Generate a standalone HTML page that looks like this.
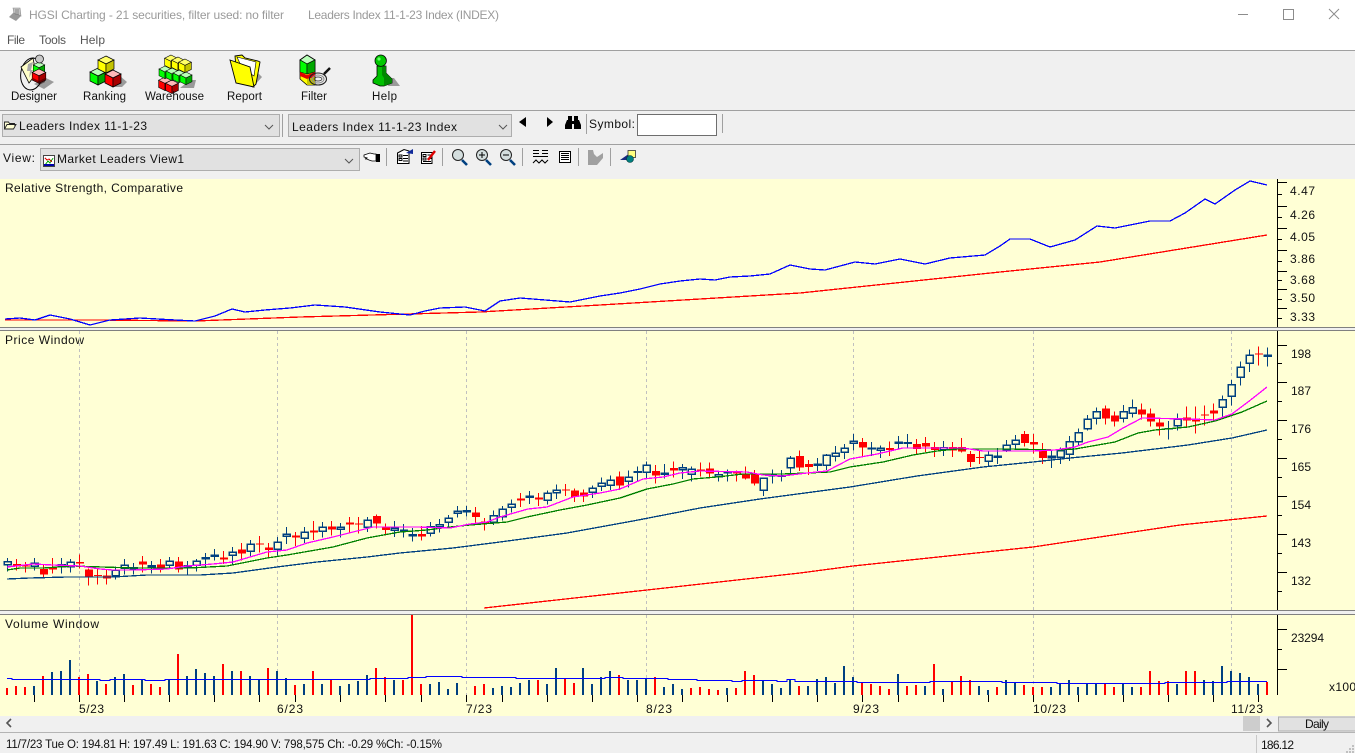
<!DOCTYPE html>
<html lang="en"><head><meta charset="utf-8"><title>HGSI Charting</title>
<style>
html,body{margin:0;padding:0;background:#f0f0f0;overflow:hidden}
svg{display:block}
text{font-family:"Liberation Sans",sans-serif;font-size:12px;fill:#111}
.t{font-size:11.5px}
.c{shape-rendering:crispEdges}
.bw{stroke:#004080;fill:none;stroke-width:4}
.h{stroke:#004080;fill:#ffffd5;stroke-width:4.5}
.rw{stroke:#f00;fill:none;stroke-width:4}
.rf{fill:#f00}
.o{stroke:#000;stroke-width:.7}
</style></head><body>
<svg width="1355" height="753" viewBox="0 0 1355 753" xmlns="http://www.w3.org/2000/svg">
<defs>
<g id="cy"><polygon class="o" fill="#ffff66" points="0,0 8,4 0,8 -8,4"/><polygon class="o" fill="#ffff00" points="-8,4 0,8 0,17 -8,13"/><polygon class="o" fill="#c4c400" points="0,8 8,4 8,13 0,17"/></g>
<g id="cg"><polygon class="o" fill="#b8ffb8" points="0,0 8,4 0,8 -8,4"/><polygon class="o" fill="#00ff00" points="-8,4 0,8 0,17 -8,13"/><polygon class="o" fill="#00a800" points="0,8 8,4 8,13 0,17"/></g>
<g id="cr"><polygon class="o" fill="#ffb8b8" points="0,0 8,4 0,8 -8,4"/><polygon class="o" fill="#ff0000" points="-8,4 0,8 0,17 -8,13"/><polygon class="o" fill="#a80000" points="0,8 8,4 8,13 0,17"/></g>
<g id="mag"><line x1="4" y1="5" x2="9" y2="10" stroke="#004080" stroke-width="2.6"/><circle cx="0" cy="0" r="5.5" fill="#d4dede" stroke="#222" stroke-width="1"/></g>
</defs>

<!-- chrome -->
<rect width="1355" height="50" fill="#fff"/>
<rect y="50" width="1355" height="1" fill="#a0a0a0"/>
<rect y="110" width="1355" height="1" fill="#a0a0a0"/>
<rect y="144" width="1355" height="1" fill="#a0a0a0"/>
<rect y="179" width="1355" height="537" fill="#ffffd5"/>

<!-- title -->
<g>
<polygon points="9,17 14,12 21,16 16,21" fill="#999"/>
<polygon points="13,8 20,8 21,16 14,13" fill="#c4c4c4" stroke="#8a8a8a" stroke-width=".6"/>
<path d="M15 10h4M15 12h4M15 14h4" stroke="#777" stroke-width=".7"/>
</g>
<text x="29" y="19" style="fill:#9a9a9a" textLength="255" lengthAdjust="spacing">HGSI Charting - 21 securities, filter used: no filter</text>
<text x="308" y="19" style="fill:#9a9a9a" textLength="191" lengthAdjust="spacing">Leaders Index 11-1-23 Index (INDEX)</text>
<g class="c" stroke="#8c8c8c" fill="none">
<path d="M1238 14.500h10"/>
<rect x="1283.500" y="9.500" width="10" height="10"/>
</g>
<path d="M1329 9l10 10M1339 9l-10 10" stroke="#8c8c8c" fill="none"/>
<text x="7" y="44" style="fill:#555" textLength="18" lengthAdjust="spacing">File</text>
<text x="39" y="44" style="fill:#555" textLength="27" lengthAdjust="spacing">Tools</text>
<text x="80" y="44" style="fill:#555" textLength="25" lengthAdjust="spacing">Help</text>

<!-- toolbar icons -->
<!-- Designer -->
<g>
<polygon points="34,84 44,89 54,82 46,78" fill="#9a9a9a"/>
<ellipse cx="32" cy="74" rx="11" ry="16" fill="none" stroke="#000" stroke-width="1" transform="rotate(8 32 72)"/>
<polygon points="21,67 33,58 36,74 29,83" fill="#ffffc8" stroke="#000" stroke-width=".8"/>
<polygon points="28,64 33,62 31,70 33,70 29,78 30,71 27,71" fill="#a8a8a8"/>
<use href="#cg" transform="translate(39,62) scale(.72)"/>
<circle cx="39.500" cy="59" r="4" fill="#c8c8c8" stroke="#222" stroke-width=".8"/>
<use href="#cr" transform="translate(39,69) scale(.85)"/>
<path d="M33 78l6 3 0 2-6-3zM39 81l6-3 0 4-6 3z" fill="#220000" opacity=".55"/>
</g>
<!-- Ranking -->
<g>
<polygon points="112,87 122,87 127,82 120,76" fill="#9a9a9a"/>
<use href="#cg" transform="translate(98,68)"/>
<use href="#cr" transform="translate(113,70)"/>
<use href="#cy" transform="translate(106,56)"/>
</g>
<!-- Warehouse -->
<g>
<polygon points="180,88 194,88 196,80 190,80" fill="#9a9a9a"/>
<use href="#cr" transform="translate(165,77) scale(.8)"/>
<use href="#cr" transform="translate(172,80) scale(.8)"/>
<use href="#cg" transform="translate(165,66) scale(.75)"/>
<use href="#cg" transform="translate(172,68) scale(.75)"/>
<use href="#cg" transform="translate(179,70) scale(.75)"/>
<use href="#cg" transform="translate(186,72) scale(.75)"/>
<use href="#cy" transform="translate(171,55) scale(.8)"/>
<use href="#cy" transform="translate(178,57) scale(.8)"/>
<use href="#cy" transform="translate(185,59) scale(.8)"/>
</g>
<!-- Report -->
<g>
<polygon points="253,87 262,77 257,72 250,82" fill="#9a9a9a"/>
<polygon points="235,56 242,55 245,58 258,61 260,62 256,84 253,87 237,80" fill="#ffff00" stroke="#000" stroke-width=".9"/>
<polygon points="237,57 256,62 254,76 242,68" fill="#fff" stroke="#000" stroke-width=".6"/>
<polygon points="230,60 250,67 254,87 236,83" fill="#ffff00" stroke="#000" stroke-width=".9"/>
</g>
<!-- Filter -->
<g>
<polygon points="300,60 307,55 315,60 315,85 307,85 300,79" fill="#ffff00" stroke="#000" stroke-width=".8"/>
<polygon points="300,60 307,55 315,60 307,64" fill="#b8ffb8" stroke="#000" stroke-width=".8"/>
<polygon points="300,60 307,64 307,74 300,72" fill="#00ff00" stroke="#000" stroke-width=".6"/>
<polygon points="307,64 315,60 315,72 307,74" fill="#00a800" stroke="#000" stroke-width=".6"/>
<polygon points="300,72 307,75 315,72 315,77 307,79 300,76" fill="#e00000"/>
<polygon points="307,79 315,77 315,85 307,85" fill="#c4c400"/>
<ellipse cx="318" cy="79" rx="8.500" ry="6" fill="none" stroke="#222" stroke-width="1.100"/>
<ellipse cx="318" cy="79" rx="6" ry="4" fill="none" stroke="#8a8a8a" stroke-width="1"/>
<ellipse cx="318" cy="79" rx="4" ry="2" fill="none" stroke="#222" stroke-width=".7"/>
<line x1="324" y1="74" x2="330" y2="68" stroke="#111" stroke-width="2.500"/>
</g>
<!-- Help -->
<g>
<polygon points="388,86 400,86 394,78 390,78" fill="#9a9a9a"/>
<polygon points="373,80 377,76 377,66 386,66 386,73 392,79 392,83 384,86 380,86 373,83" fill="#00c000" stroke="#000" stroke-width=".8"/>
<polygon points="382,67 386,66 386,73 392,79 392,83 384,86 384,78 382,75" fill="#008800"/>
<circle cx="380.700" cy="60.700" r="5.700" fill="#00c800" stroke="#000" stroke-width=".8"/>
<circle cx="379" cy="59" r="1.600" fill="#66ff66"/>
</g>
<text class="t" x="11" y="100" textLength="46" lengthAdjust="spacing">Designer</text>
<text class="t" x="83" y="100" textLength="43" lengthAdjust="spacing">Ranking</text>
<text class="t" x="145" y="100" textLength="59" lengthAdjust="spacing">Warehouse</text>
<text class="t" x="227" y="100" textLength="35" lengthAdjust="spacing">Report</text>
<text class="t" x="301" y="100" textLength="26" lengthAdjust="spacing">Filter</text>
<text class="t" x="372" y="100" textLength="25" lengthAdjust="spacing">Help</text>

<!-- row 2 -->
<g class="c">
<rect x="2.500" y="114.500" width="277" height="22" fill="#e1e1e1" stroke="#adadad"/>
<rect x="282" y="114" width="1" height="23" fill="#a0a0a0"/>
<rect x="288.500" y="114.500" width="223" height="22" fill="#e1e1e1" stroke="#adadad"/>
<rect x="586" y="114" width="1" height="20" fill="#a0a0a0"/>
<rect x="637.500" y="114.500" width="79" height="21" fill="#fff" stroke="#6e6e6e"/>
<rect x="722" y="114" width="1" height="19" fill="#a0a0a0"/>
</g>
<path d="M4.500 129V122h4l1 1.500h5v2M4.500 129l2.500-4.500h9l-2.500 4.500z" fill="#ffffd5" stroke="#222" stroke-width=".9"/>
<text x="19" y="130" textLength="128" lengthAdjust="spacing">Leaders Index 11-1-23</text>
<text x="292" y="131" textLength="165" lengthAdjust="spacing">Leaders Index 11-1-23 Index</text>
<polygon points="526,117 526,127 519,122" fill="#000"/>
<polygon points="547,117 547,127 553,122" fill="#000"/>
<g fill="#000">
<rect x="568" y="116" width="4" height="4"/><rect x="574" y="116" width="4" height="4"/>
<polygon points="567,120 572,120 572,129 565,129 565,125"/>
<polygon points="574,120 579,120 581,125 581,129 574,129"/>
<rect x="572" y="121" width="2" height="3"/>
</g>
<text x="589" y="128" textLength="46" lengthAdjust="spacing">Symbol:</text>

<!-- row 3 -->
<text x="3" y="162" textLength="32" lengthAdjust="spacing">View:</text>
<rect class="c" x="40.500" y="148.500" width="319" height="22" fill="#e1e1e1" stroke="#adadad"/>
<path d="M265 125l4 4 4-4M499 125l4 4 4-4M345 159l4 4 4-4" fill="none" stroke="#555"/>
<g class="c">
<rect x="43.500" y="155.500" width="11" height="11" fill="#fff" stroke="#444"/>
<path d="M45 165l3-4 2 2 3-5" fill="none" stroke="#0a0"/>
<path d="M45 158l2 2 2-1 3 3" fill="none" stroke="#d00"/>
<rect x="44" y="164" width="10" height="2" fill="#00a"/>
</g>
<text x="57" y="163" textLength="127" lengthAdjust="spacing">Market Leaders View1</text>
<g class="c" fill="#a0a0a0">
<rect x="386" y="148" width="1" height="18"/><rect x="442" y="148" width="1" height="18"/>
<rect x="522" y="148" width="1" height="18"/><rect x="578" y="148" width="1" height="18"/>
<rect x="610" y="148" width="1" height="18"/>
</g>
<!-- hand -->
<path d="M364 155l6-2 4 1h2v7h-4l-3-1-2-1h-2l2-1-3-1z" fill="#fff" stroke="#000" stroke-width=".8"/>
<rect x="376" y="154" width="4" height="8" fill="#000"/>
<!-- doc icons -->
<g fill="#fff" stroke="#000">
<polygon points="397.500,153 404,149.500 409,151 409,163.500 397.500,163.500"/>
<polygon points="421.500,152.500 432,152.500 432,163.500 421.500,163.500"/>
</g>
<path d="M399 155h3v2h-3zM399 158.500h3v2h-3zM403 155.500h5M403 158.500h5M403 161h5M423 154.500h3v2h-3zM423 158h3v2h-3zM427.500 155h4M427.500 158.500h4M423 161.500h8" stroke="#000" fill="none" stroke-width=".9"/>
<polygon points="406,153 413,149 413,154" fill="#102a9a"/>
<line x1="428" y1="160" x2="435" y2="151" stroke="#d00" stroke-width="2.400"/>
<!-- magnifiers -->
<use href="#mag" transform="translate(458,155)"/>
<use href="#mag" transform="translate(482,155)"/>
<use href="#mag" transform="translate(506,155)"/>
<path d="M479 155h6M482 152v6M503 155h6" stroke="#000" fill="none"/>
<!-- lines -->
<path class="c" d="M533 150.500h6M542 150.500h6M533 153.500h6M542 153.500h6M533 156.500h15" stroke="#000" fill="none"/>
<path d="M533 163l3-3 3 3 3-3 3 3 3-3" stroke="#000" fill="none"/>
<!-- list -->
<rect class="c" x="559.500" y="151.500" width="11" height="11" fill="#fff" stroke="#000"/>
<path class="c" d="M561 153.500h8M561 155.500h8M561 157.500h8M561 159.500h8" stroke="#000" fill="none"/>
<!-- gray chart -->
<polygon points="588,165 588,150 593,150 594,154 597,157 603,153 603,158 597,165" fill="#a0a0a0"/>
<!-- last -->
<polygon points="620,160 630,153 630,160" fill="#1a2a80"/>
<rect x="628" y="150.500" width="7.500" height="7" fill="#ffff80" stroke="#333" stroke-width=".8"/>
<circle cx="630" cy="159" r="3.500" fill="#008080" stroke="#003838" stroke-width=".6"/>

<!-- pane separators -->
<g class="c">
<rect y="327" width="1355" height="1" fill="#808080"/><rect y="328" width="1355" height="2" fill="#f0f0f0"/><rect y="330" width="1355" height="1" fill="#808080"/>
<rect y="610" width="1355" height="1" fill="#808080"/><rect y="611" width="1355" height="3" fill="#f0f0f0"/><rect y="614" width="1355" height="1" fill="#808080"/>
</g>

<!-- pane labels -->
<text x="5" y="192" textLength="178" lengthAdjust="spacing">Relative Strength, Comparative</text>
<text x="5" y="344" textLength="79" lengthAdjust="spacing">Price Window</text>
<text x="5" y="628" textLength="94" lengthAdjust="spacing">Volume Window</text>

<!-- dashed gridlines -->
<path class="c" d="M79.500 331V610M277.500 331V610M466.500 331V610M646.500 331V610M853.500 331V610M1033.500 331V610M1231.500 331V610M79.500 615V695M277.500 615V695M466.500 615V695M646.500 615V695M853.500 615V695M1033.500 615V695M1231.500 615V695" stroke="#c0c0c0" stroke-dasharray="3 3" fill="none"/>

<!-- RS lines -->
<g class="c" fill="none" stroke-width="1.300">
<polyline stroke="#ff0000" points="5,320 100,320 195,321 300,317 480,312 600,305 800,293 1000,272 1100,262 1267,235"/>
<polyline stroke="#0000ff" points="5,319 20,318 35,320 50,315 70,319 90,325 110,320 140,318 175,320 195,321 215,316 232,309 245,312 265,310 290,308 315,305 345,307 380,312 410,315 425,311 440,308 465,307 485,311 500,301 520,298 545,300 570,302 600,296 620,293 640,289 660,284 680,281 700,279 715,280 730,277 750,276 770,274 790,265 810,269 825,270 840,266 855,262 875,264 900,259 925,264 950,258 985,255 1000,246 1010,239 1030,239 1050,247 1075,240 1097,226 1115,228 1135,224 1150,221 1170,221 1185,213 1205,199 1215,204 1235,190 1250,181 1267,185"/>
</g>

<!-- candles -->
<g class="c" transform="translate(0,380) scale(.33333)">
<path class="bw" d="M22.500 534V575M103.500 534V571M184.500 534V581M211.500 537V578M346.500 559V599M373.500 537V584M400.500 549V584M454.500 543V581M508.500 531V566M562.500 543V584M589.500 537V575M616.500 519V560M643.500 507V542M697.500 501V554M751.500 480V530M832.500 471V527M859.500 441V492M913.500 441V489M967.500 426V472M1021.500 429V473M1102.500 411V456M1183.500 423V471"/>
<path class="h" d="M13.500 545h21v9h-21zM94.500 550h21v9h-21zM175.500 554h21v6h-21zM202.500 547h21v13h-21zM337.500 571h21v16h-21zM364.500 556h21v9h-21zM391.500 564h21v3h-21zM445.500 557h21v3h-21zM499.500 544h21v12h-21zM553.500 557h21v3h-21zM580.500 544h21v12h-21zM607.500 533h21v3h-21zM634.500 526h21v3h-21zM688.500 517h21v9h-21zM742.500 493h21v21h-21zM823.500 487h21v21h-21zM850.500 463h21v6h-21zM904.500 457h21v18h-21zM958.500 442h21v12h-21zM1012.500 442h21v6h-21zM1093.500 421h21v21h-21zM1174.500 445h21v6h-21z"/>
<path class="rw" d="M49.500 537V572M76.500 546V578M130.500 555V594M157.500 534V581M238.500 524V565M265.500 565V617M292.500 565V614M319.500 570V614M427.500 528V578M481.500 537V578M535.500 531V578M670.500 513V552M724.500 489V542M778.500 468V518M805.500 489V533M886.500 456V498M940.500 423V480M994.500 423V466M1048.500 411V457M1075.500 411V460M1129.500 403V445M1156.500 430V466"/>
<path class="rf" d="M39 552h24v7h-24zM66 556h24v4h-24zM120 567h24v17h-24zM147 562h24v7h-24zM228 546h24v5h-24zM255 568h24v22h-24zM282 585h24v3h-24zM309 586h24v9h-24zM417 544h24v10h-24zM471 553h24v10h-24zM525 544h24v24h-24zM660 532h24v7h-24zM714 508h24v13h-24zM768 490h24v4h-24zM795 502h24v8h-24zM876 466h24v6h-24zM930 451h24v7h-24zM984 439h24v10h-24zM1038 427h24v7h-24zM1065 430h24v4h-24zM1119 408h24v23h-24zM1146 441h24v9h-24z"/>
</g>
<g class="c" transform="translate(400,440) scale(.33333)">
<path class="bw" d="M10.500 252V293M37.500 264V305M91.500 246V290M118.500 237V278M145.500 225V264M172.500 198V233M199.500 198V230M280.500 212V255M307.500 198V242M334.500 178V218M388.500 153V192M442.500 151V194M469.500 133V177M577.500 136V174M604.500 112V153M631.500 106V150M685.500 91V142M712.500 79V123M739.500 64V116M793.500 72V116M847.500 72V117M874.500 79V125M955.500 91V125M982.500 88V125"/>
<path class="h" d="M1.500 271h21v3h-21zM28.500 284h21v3h-21zM82.500 260h21v20h-21zM109.500 254h21v7h-21zM136.500 235h21v12h-21zM163.500 214h21v6h-21zM190.500 212h21v3h-21zM271.500 227h21v20h-21zM298.500 208h21v22h-21zM325.500 193h21v9h-21zM379.500 169h21v3h-21zM433.500 160h21v21h-21zM460.500 151h21v7h-21zM568.500 145h21v12h-21zM595.500 130h21v9h-21zM622.500 121h21v15h-21zM676.500 112h21v12h-21zM703.500 96h21v1h-21zM730.500 76h21v21h-21zM784.500 100h21v3h-21zM838.500 83h21v6h-21zM865.500 88h21v15h-21zM946.500 104h21v6h-21zM973.500 98h21v1h-21z"/>
<path class="rw" d="M64.500 258V302M226.500 201V249M253.500 234V272M361.500 159V201M415.500 159V198M496.500 132V168M523.500 145V186M550.500 148V186M658.500 94V150M766.500 75V131M820.500 64V113M901.500 67V110M928.500 67V115M1009.500 91V125M1036.500 79V118"/>
<path class="rf" d="M54 282h24v8h-24zM216 217h24v14h-24zM243 245h24v6h-24zM351 175h24v7h-24zM405 172h24v7h-24zM486 148h24v4h-24zM513 151h24v20h-24zM540 157h24v12h-24zM648 109h24v28h-24zM756 93h24v14h-24zM810 84h24v8h-24zM891 88h24v6h-24zM918 85h24v15h-24zM999 97h24v3h-24zM1026 103h24v13h-24z"/>
</g>
<g class="c" transform="translate(750,390) scale(.33333)">
<path class="bw" d="M40.500 265V318M67.500 238V281M94.500 240V275M121.500 198V250M202.500 204V243M229.500 192V240M256.500 168V214M283.500 162V207M310.500 132V182M364.500 156V198M391.500 166V204M445.500 138V178M472.500 132V174M580.500 153V198M715.500 183V231M742.500 174V222M769.500 150V186M796.500 135V178M904.500 180V234"/>
<path class="h" d="M31.500 265h21v36h-21zM58.500 256h21v2h-21zM85.500 257h21v2h-21zM112.500 205h21v28h-21zM193.500 223h21v3h-21zM220.500 196h21v30h-21zM247.500 190h21v9h-21zM274.500 175h21v12h-21zM301.500 154h21v6h-21zM355.500 175h21v2h-21zM382.500 175h21v6h-21zM436.500 157h21v3h-21zM463.500 159h21v1h-21zM571.500 174h21v6h-21zM706.500 196h21v18h-21zM733.500 199h21v3h-21zM760.500 166h21v15h-21zM787.500 151h21v12h-21zM895.500 199h21v4h-21z"/>
<path class="rw" d="M13.500 240V287M148.500 181V243M175.500 210V255M337.500 144V198M418.500 154V198M499.500 147V192M526.500 141V186M553.500 156V201M607.500 156V201M634.500 144V188M661.500 183V231M688.500 180V222M823.500 123V170M850.500 132V190M877.500 159V222"/>
<path class="rf" d="M3 253h24v28h-24zM138 198h24v35h-24zM165 222h24v9h-24zM327 156h24v17h-24zM408 174h24v6h-24zM489 162h24v15h-24zM516 159h24v11h-24zM543 171h24v9h-24zM597 171h24v11h-24zM624 171h24v14h-24zM651 192h24v24h-24zM678 201h24v3h-24zM813 132h24v27h-24zM840 156h24v8h-24zM867 180h24v24h-24z"/>
</g>
<g class="c" transform="translate(1055,330) scale(.33333)">
<path class="bw" d="M16.500 352V402M43.500 318V393M70.500 295V345M97.500 255V302M124.500 232V284M205.500 225V278M232.500 208V263M340.500 273V329M367.500 250V302M502.500 196V263M529.500 150V226M556.500 94V167M583.500 58V126M637.500 52V110"/>
<path class="h" d="M7.500 363h21v19h-21zM34.500 335h21v38h-21zM61.500 308h21v27h-21zM88.500 268h21v28h-21zM115.500 245h21v20h-21zM196.500 245h21v20h-21zM223.500 233h21v17h-21zM331.500 296h21v1h-21zM358.500 268h21v19h-21zM493.500 209h21v23h-21zM520.500 164h21v35h-21zM547.500 112h21v30h-21zM574.500 76h21v24h-21zM628.500 76h21v3h-21z"/>
<path class="rw" d="M151.500 226V284M178.500 244V290M259.500 220V268M286.500 235V290M313.500 265V317M394.500 229V292M421.500 229V311M448.500 226V287M475.500 220V272M610.500 49V107"/>
<path class="rf" d="M141 235h24v30h-24zM168 256h24v19h-24zM249 238h24v16h-24zM276 250h24v25h-24zM303 277h24v13h-24zM384 262h24v10h-24zM411 265h24v10h-24zM438 253h24v4h-24zM465 241h24v10h-24zM600 70h24v4h-24z"/>
</g>

<!-- moving averages -->
<g class="c" fill="none" stroke-width="1.300">
<polyline stroke="#ff0000" points="484,608 647,590 800,573 853,566 1033,547 1180,525 1267,516"/>
<polyline stroke="#004080" points="7,579 30,578 67,577 113,577 147,575 200,575 233,573 277,567 317,562 367,557 400,553 453,548 500,542 567,533 633,521 700,508 760,499 850,487 917,476 983,467 1033,462 1070,458 1122,453 1188,445 1232,438 1267,430"/>
<polyline stroke="#008000" points="7,570 20,568 43,568 73,566 102,567 133,568 167,568 190,568 227,566 267,558 287,555 333,547 367,538 400,532 427,530 450,527 470,525 507,522 527,517 560,510 587,505 620,498 647,489 673,484 693,479 717,477 743,474 783,474 830,472 850,467 883,462 913,455 937,451 957,449 1010,449 1055,450 1075,449 1115,442 1138,433 1155,430 1188,427 1215,421 1242,412 1267,401"/>
<polyline stroke="#ff00ff" points="7,567 33,564 53,565 80,566 100,569 113,570 133,570 167,569 187,566 213,564 233,562 267,552 287,550 307,543 333,537 353,532 373,527 400,527 417,527 450,528 470,524 487,522 500,517 528,509 547,507 573,497 600,493 620,489 643,479 663,477 680,473 700,471 747,472 763,475 783,476 807,473 827,471 850,459 877,454 903,448 963,448 983,451 1010,451 1033,451 1055,450 1075,447 1088,442 1108,437 1123,428 1142,418 1188,419 1215,420 1232,414 1248,402 1267,387"/>
</g>

<!-- volume bars -->
<path class="c" stroke="#004080" stroke-width="2" fill="none" d="M34 695v-9M52 695v-23M61 695v-24M70 695v-35M97 695v-14M115 695v-18M124 695v-21M142 695v-16M169 695v-16M187 695v-19M196 695v-26M205 695v-22M214 695v-19M232 695v-24M250 695v-19M259 695v-16M277 695v-24M286 695v-17M304 695v-11M322 695v-11M340 695v-9M349 695v-11M358 695v-14M367 695v-20M394 695v-15M430 695v-11M439 695v-13M448 695v-6M457 695v-12M493 695v-7M502 695v-9M511 695v-8M520 695v-12M529 695v-15M547 695v-11M556 695v-27M583 695v-27M592 695v-11M601 695v-18M610 695v-24M628 695v-15M637 695v-15M646 695v-17M664 695v-8M673 695v-11M682 695v-6M727 695v-7M763 695v-14M772 695v-11M781 695v-7M790 695v-16M808 695v-9M817 695v-16M826 695v-18M835 695v-12M844 695v-29M853 695v-18M898 695v-21M925 695v-9M943 695v-6M979 695v-9M988 695v-5M1006 695v-15M1015 695v-13M1051 695v-8M1060 695v-12M1069 695v-15M1078 695v-8M1087 695v-12M1096 695v-12M1123 695v-12M1132 695v-8M1177 695v-11M1204 695v-15M1213 695v-14M1222 695v-29M1231 695v-24M1240 695v-22M1249 695v-18M1258 695v-11"/>
<path class="c" stroke="#ff0000" stroke-width="2" fill="none" d="M7 695v-7M16 695v-9M25 695v-8M43 695v-19M79 695v-18M88 695v-21M106 695v-11M133 695v-10M151 695v-11M160 695v-8M178 695v-41M223 695v-31M241 695v-24M268 695v-27M295 695v-10M313 695v-24M331 695v-16M376 695v-27M385 695v-18M403 695v-15M412 695v-80M421 695v-11M475 695v-9M484 695v-11M538 695v-15M565 695v-16M574 695v-12M619 695v-20M655 695v-18M691 695v-7M700 695v-8M709 695v-6M718 695v-5M736 695v-7M745 695v-24M754 695v-20M799 695v-9M862 695v-13M871 695v-11M880 695v-9M889 695v-6M907 695v-9M916 695v-10M934 695v-31M952 695v-14M961 695v-19M970 695v-15M997 695v-8M1024 695v-10M1033 695v-8M1042 695v-8M1105 695v-12M1114 695v-8M1141 695v-8M1150 695v-24M1159 695v-14M1168 695v-14M1186 695v-24M1195 695v-24M1267 695v-13"/>
<!-- volume average -->
<path class="c" stroke="#0000ff" fill="none" d="M7 678.500H12V679.500H100V680.500H110V679.500H145V680.500H165V679.500H370V678.500H408V677.500H426V676.500H462V677.500H516V678.500H605V677.500H623V678.500H668V679.500H697V680.500H732V681.500H742V680.500H777V681.500H787V679.500H795V681.500H857V682.500H930V681.500H1002V682.500H1057V683.500H1165V682.500H1227V681.500H1267"/>
<!-- time ticks -->
<path class="c" stroke="#000" fill="none" d="M34.500 695v7M79.500 695v7M124.500 695v7M169.500 695v7M214.500 695v7M259.500 695v7M295.500 695v7M340.500 695v7M385.500 695v7M421.500 695v7M466.500 695v7M502.500 695v7M547.500 695v7M592.500 695v7M637.500 695v7M682.500 695v7M727.500 695v7M772.500 695v7M817.500 695v7M862.500 695v7M898.500 695v7M943.500 695v7M988.500 695v7M1033.500 695v7M1078.500 695v7M1123.500 695v7M1168.500 695v7M1213.500 695v7M1258.500 695v7"/>
<text x="79" y="713" textLength="25" lengthAdjust="spacing">5/23</text>
<text x="277" y="713" textLength="26" lengthAdjust="spacing">6/23</text>
<text x="466" y="713" textLength="26" lengthAdjust="spacing">7/23</text>
<text x="646" y="713" textLength="26" lengthAdjust="spacing">8/23</text>
<text x="853" y="713" textLength="26" lengthAdjust="spacing">9/23</text>
<text x="1033" y="713" textLength="33" lengthAdjust="spacing">10/23</text>
<text x="1231" y="713" textLength="32" lengthAdjust="spacing">11/23</text>

<!-- axes -->
<path class="c" stroke="#000" fill="none" d="M1277.500 179V327M1277.500 331V610M1277.500 615V695
M1277 182.500h10M1277 194.500h5M1277 206.500h10M1277 217.500h5M1277 228.500h10M1277 239.500h5M1277 250.500h10M1277 261.500h5M1277 271.500h10M1277 280.500h5M1277 289.500h10M1277 299.500h5M1277 308.500h10M1277 318.500h5
M1277 345.500h10M1277 363.500h5M1277 382.500h10M1277 401.500h5M1277 420.500h10M1277 439.500h5M1277 458.500h10M1277 477.500h5M1277 496.500h10M1277 515.500h5M1277 534.500h10M1277 553.500h5M1277 572.500h10M1277 591.500h5
M1277 629.500h10M1277 649.500h5M1277 669.500h10"/>
<text x="1290" y="195" textLength="25" lengthAdjust="spacing">4.47</text>
<text x="1290" y="219" textLength="25" lengthAdjust="spacing">4.26</text>
<text x="1290" y="241" textLength="25" lengthAdjust="spacing">4.05</text>
<text x="1290" y="263" textLength="25" lengthAdjust="spacing">3.86</text>
<text x="1290" y="284" textLength="25" lengthAdjust="spacing">3.68</text>
<text x="1290" y="302" textLength="25" lengthAdjust="spacing">3.50</text>
<text x="1290" y="321" textLength="25" lengthAdjust="spacing">3.33</text>
<text x="1291" y="358" textLength="20" lengthAdjust="spacing">198</text>
<text x="1291" y="395" textLength="20" lengthAdjust="spacing">187</text>
<text x="1291" y="433" textLength="20" lengthAdjust="spacing">176</text>
<text x="1291" y="471" textLength="20" lengthAdjust="spacing">165</text>
<text x="1291" y="509" textLength="20" lengthAdjust="spacing">154</text>
<text x="1291" y="547" textLength="20" lengthAdjust="spacing">143</text>
<text x="1291" y="585" textLength="20" lengthAdjust="spacing">132</text>
<text x="1291" y="642" textLength="33" lengthAdjust="spacing">23294</text>
<text x="1329" y="691" textLength="27" lengthAdjust="spacing">x100</text>

<!-- scrollbar -->
<path d="M11 719l-4 4 4 4" fill="none" stroke="#555" stroke-width="1.600"/>
<rect class="c" x="1243" y="716" width="17" height="15" fill="#cdcdcd"/>
<path d="M1267 719l4 4-4 4" fill="none" stroke="#555" stroke-width="1.600"/>
<rect class="c" x="1278.500" y="717" width="77" height="14" fill="#e1e1e1" stroke="#adadad"/>
<text x="1305" y="728" textLength="24" lengthAdjust="spacing">Daily</text>

<!-- status -->
<rect class="c" y="732" width="1355" height="1" fill="#b4b4b4"/>
<rect class="c" x="1256" y="735" width="1" height="18" fill="#c8c8c8"/>
<text class="t" x="6" y="748" textLength="436" lengthAdjust="spacing">11/7/23 Tue O: 194.81 H: 197.49 L: 191.63 C: 194.90 V: 798,575 Ch: -0.29 %Ch: -0.15%</text>
<text x="1261" y="749" textLength="33" lengthAdjust="spacing">186.12</text>
<path class="c" d="M1352 745h2v2h-2zM1349 748h2v2h-2zM1352 748h2v2h-2zM1346 751h2v2h-2zM1349 751h2v2h-2zM1352 751h2v2h-2z" fill="#c0c0c0"/>
</svg>
</body></html>
